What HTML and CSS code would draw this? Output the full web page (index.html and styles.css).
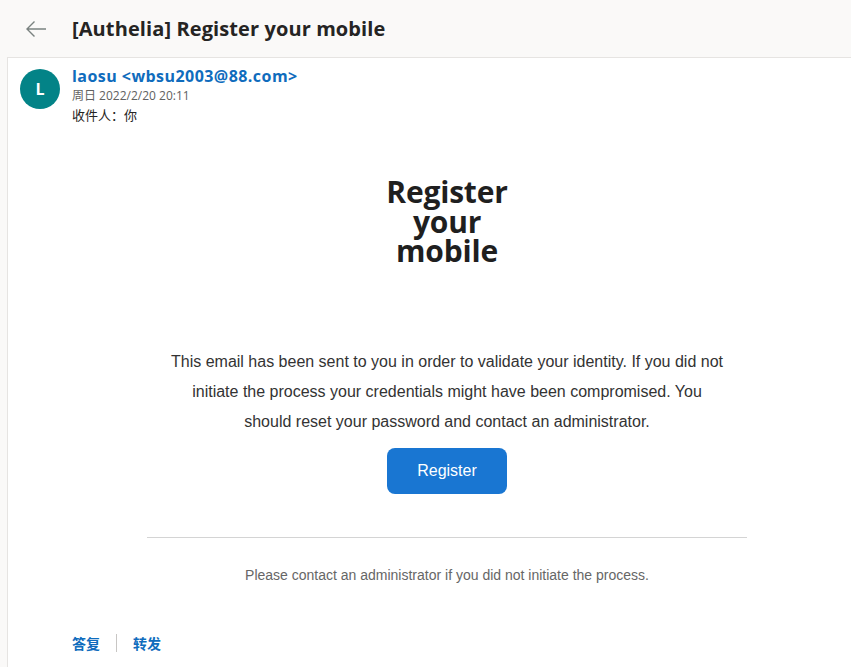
FILE: index.html
```html
<!DOCTYPE html>
<html>
<head>
<meta charset="utf-8">
<link rel="stylesheet" href="styles.css">
</head>
<body>
<header class="topbar">
  <svg class="back" width="22" height="18" viewBox="0 0 22 18"><path d="M21 9H2M9.5 1.5L2 9l7.5 7.5" fill="none" stroke="#7a8280" stroke-width="1.4"/></svg>
  <h1 class="subject">[Authelia] Register your mobile</h1>
</header>
<main class="card">
  <div class="sender">
    <div class="avatar">L</div>
    <div class="meta">
      <div class="from">laosu &lt;wbsu2003@88.com&gt;</div>
      <div class="date">周日 2022/2/20 20:11</div>
      <div class="to">收件人：你</div>
    </div>
  </div>
  <div class="mail">
    <div class="column">
      <h2 class="headline"><span class="hl">Register</span><span class="hl">your</span><span class="hl">mobile</span></h2>
      <p class="lead">This email has been sent to you in order to validate your identity. If you did not initiate the process your credentials might have been compromised. You should reset your password and contact an administrator.</p>
      <a class="btn">Register</a>
      <hr class="rule">
      <p class="foot">Please contact an administrator if you did not initiate the process.</p>
    </div>
  </div>
  <div class="actions">
    <a class="act">答复</a>
    <span class="sep"></span>
    <a class="act">转发</a>
  </div>
</main>
</body>
</html>
```
FILE: styles.css
```css
html, body { margin: 0; padding: 0; }
body {
  background: #faf9f8;
  font-family: "Open Sans", "Noto Sans", "Noto Sans CJK SC", sans-serif;
  width: 851px;
  height: 667px;
  overflow: hidden;
}
.topbar {
  height: 57px;
  display: flex;
  align-items: center;
  box-sizing: border-box;
}
.back { margin-left: 25px; margin-right: 25px; margin-top: 1px; }
.subject {
  margin: 0;
  font-size: 20px;
  font-weight: 700;
  color: #252423;
  letter-spacing: 0.1px;
}
.card {
  margin-left: 7px;
  background: #fff;
  border-left: 1px solid #e6e4e2;
  border-top: 1px solid #e6e4e2;
  height: 620px;
}
.sender {
  display: flex;
  padding: 11px 0 0 12px;
}
.avatar {
  width: 40px; height: 40px;
  border-radius: 50%;
  background: #038387;
  color: #fff;
  font-weight: 700;
  font-size: 16px;
  display: flex; align-items: center; justify-content: center;
}
.meta { margin-left: 12px; margin-top: -4px; }
.from { color: #0f6cbd; font-weight: 700; font-size: 16px; line-height: 22px; letter-spacing: 0.45px; }
.date { color: #616161; font-size: 12px; line-height: 17px; font-family: "Open Sans", "Noto Sans CJK SC", sans-serif; }
.to { color: #252423; font-size: 13px; line-height: 20px; margin-top: 1px; font-family: "Open Sans", "Noto Sans CJK SC", sans-serif; }
.mail {
  display: flex;
  justify-content: center;
  padding-left: 35px;
}
.column { width: 600px; text-align: center; }
.headline {
  margin: 52px 0 0;
  font-size: 30px;
  font-weight: 700;
  color: #1f1f1f;
  letter-spacing: -0.2px;
}
.hl { display: block; height: 29.5px; line-height: 29.5px; overflow: visible; }
.lead {
  margin: 81px 22px 0;
  font-family: "Liberation Sans", Arial, sans-serif;
  font-size: 16px;
  line-height: 30px;
  color: #333;
}
.btn {
  display: inline-block;
  margin-top: 11px;
  width: 120px; height: 46px;
  line-height: 46px;
  border-radius: 8px;
  background: #1976d2;
  color: #fff;
  font-family: "Liberation Sans", Arial, sans-serif;
  font-size: 16px;
}
.rule {
  margin: 43px 0 0;
  border: 0;
  border-top: 1px solid #d4d4d4;
}
.foot {
  margin: 29px 0 0;
  font-family: "Liberation Sans", Arial, sans-serif;
  font-size: 14px;
  color: #666;
  line-height: 16px;
}
.actions {
  display: flex;
  align-items: center;
  padding-left: 64px;
  margin-top: 50px;
}
.act { color: #0f6cbd; font-size: 14px; font-weight: 700; font-family: "Noto Sans CJK SC", sans-serif; }
.sep { width: 1px; height: 18px; background: #c8c6c4; margin: 0 16px; }
```
